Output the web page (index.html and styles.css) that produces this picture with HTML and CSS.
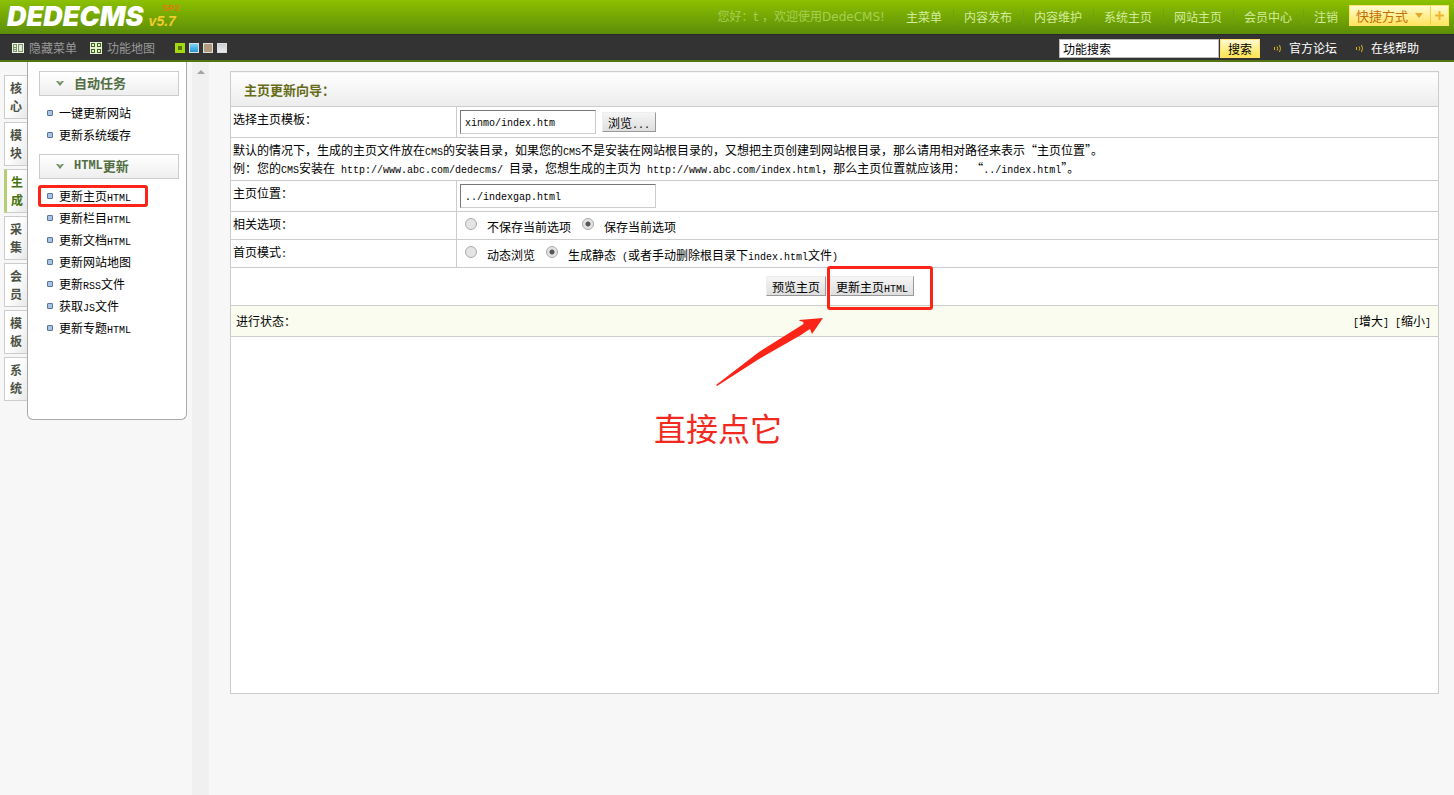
FILE: index.html
```
<!DOCTYPE html>
<html lang="zh-CN">
<head>
<meta charset="utf-8">
<title>DedeCMS</title>
<link rel="stylesheet" href="styles.css">
</head>
<body>
<header class="top">
  <div class="brand"><span class="logo">DEDECMS</span><span class="version">v5.7<small class="sp">SP2</small></span></div>
  <span class="hello">您好：t ，欢迎使用DedeCMS!</span>
  <nav class="topnav">
    <a href="#">主菜单</a><a href="#">内容发布</a><a href="#">内容维护</a><a href="#">系统主页</a><a href="#">网站主页</a><a href="#">会员中心</a><a href="#">注销</a>
  </nav>
  <div class="quick"><button class="quick-main" type="button">快捷方式<svg width="8" height="5" viewBox="0 0 8 5"><path d="M0 0h8L4 5z" fill="#e5a62c"/></svg></button><button class="quick-add" type="button" aria-label="添加"><svg width="9" height="9" viewBox="0 0 9 9"><path d="M3.500 0h2v3.500h3.500v2H5.500V9h-2V5.500H0v-2h3.500z" fill="#efb52e"/></svg></button></div>
</header>
<div class="bar">
  <a class="tool" href="#"><svg width="12" height="12" viewBox="0 0 12 12"><path d="M0 1h12v10H0z" fill="#eef3e6"/><path d="M1 2h4v8H1zM6 2h5v8H6z" fill="#7d9569"/><path d="M2 3h2v2H2zM2 6h2v1H2zM2 8h2v1H2zM7 3h3v6H7z" fill="#dfe8d4"/></svg>隐藏菜单</a>
  <a class="tool" href="#"><svg width="12" height="12" viewBox="0 0 12 12"><path d="M0 0h12v12H0z" fill="#e5efcf"/><path d="M1 1h4v4H1zM7 1h4v4H7zM1 7h4v4H1zM7 7h4v4H7z" fill="#42651f"/><path d="M2 2h2v2H2zM8 2h2v2H8zM2 8h2v2H2zM8 8h2v2H8z" fill="#e5efcf"/></svg>功能地图</a>
  <div class="skins"><i class="skin green"></i><i class="skin blue"></i><i class="skin brown"></i><i class="skin grey"></i></div>
  <form class="search"><input type="text" value="功能搜索" aria-label="功能搜索"><button type="button">搜索</button></form>
  <div class="help">
    <a href="#"><svg width="9" height="9" viewBox="0 0 9 9" fill="none" stroke="#d8b81e"><path d="M1.500 3v3M4 2.500q1.500 2 0 4M6.500 1q2 3.500 0 7"/></svg>官方论坛</a>
    <a href="#"><svg width="9" height="9" viewBox="0 0 9 9" fill="none" stroke="#d8b81e"><path d="M1.500 3v3M4 2.500q1.500 2 0 4M6.500 1q2 3.500 0 7"/></svg>在线帮助</a>
  </div>
</div>
<div class="page">
  <nav class="tabs">
    <a href="#">核<br>心</a><a href="#">模<br>块</a><a href="#" class="on">生<br>成</a><a href="#">采<br>集</a><a href="#">会<br>员</a><a href="#">模<br>板</a><a href="#">系<br>统</a>
  </nav>
  <aside class="side">
    <h2><svg width="8" height="5" viewBox="0 0 8 5"><path d="M0 0h8L4 5z" fill="#6f8d63"/><path d="M2 0h4L4 2z" fill="#cfe0c8"/></svg>自动任务</h2>
    <ul>
      <li><a href="#">一键更新网站</a></li>
      <li><a href="#">更新系统缓存</a></li>
    </ul>
    <h2><svg width="8" height="5" viewBox="0 0 8 5"><path d="M0 0h8L4 5z" fill="#6f8d63"/><path d="M2 0h4L4 2z" fill="#cfe0c8"/></svg><b class="serif">HTML</b>更新</h2>
    <ul>
      <li class="marked"><a href="#">更新主页<span class="m">HTML</span></a></li>
      <li><a href="#">更新栏目<span class="m">HTML</span></a></li>
      <li><a href="#">更新文档<span class="m">HTML</span></a></li>
      <li><a href="#">更新网站地图</a></li>
      <li><a href="#">更新<span class="m">RSS</span>文件</a></li>
      <li><a href="#">获取<span class="m">JS</span>文件</a></li>
      <li><a href="#">更新专题<span class="m">HTML</span></a></li>
    </ul>
  </aside>
  <div class="scroll"><svg width="8" height="4" viewBox="0 0 8 4"><path d="M0 4h8L4 0z" fill="#a3a3a3"/></svg></div>
  <main class="content">
    <table class="form">
      <colgroup><col class="label-col"><col></colgroup>
      <tr class="title"><th colspan="2">主页更新向导：</th></tr>
      <tr class="field"><td><label for="tpl">选择主页模板：</label></td><td><div class="line"><input class="text short" id="tpl" type="text" value="xinmo/index.htm"><button class="btn" type="button">浏览<span class="m">...</span></button></div></td></tr>
      <tr class="note"><td colspan="2">默认的情况下，生成的主页文件放在<span class="m">CMS</span>的安装目录，如果您的<span class="m">CMS</span>不是安装在网站根目录的，又想把主页创建到网站根目录，那么请用相对路径来表示“主页位置”。<br>例：您的<span class="m">CMS</span>安装在<span class="m"> http://www.abc.com/dedecms/ </span>目录，您想生成的主页为<span class="m"> http://www.abc.com/index.html</span>，那么主页位置就应该用：<span class="m"> </span>“<span class="m">../index.html</span>”。</td></tr>
      <tr class="field"><td><label for="pos">主页位置：</label></td><td><input class="text long" id="pos" type="text" value="../indexgap.html"></td></tr>
      <tr class="option"><td>相关选项：</td><td><div class="radios"><label><input type="radio" name="save"><span>不保存当前选项</span></label><label><input type="radio" name="save" checked><span>保存当前选项</span></label></div></td></tr>
      <tr class="option"><td>首页模式<span class="m">:</span></td><td><div class="radios"><label><input type="radio" name="mode"><span>动态浏览</span></label><label><input type="radio" name="mode" checked><span>生成静态<span class="m"> (</span>或者手动删除根目录下<span class="m">index.html</span>文件<span class="m">)</span></span></label></div></td></tr>
      <tr class="actions"><td colspan="2"><div class="buttons"><button class="btn" type="button">预览主页</button><div class="target"><button class="btn" type="button">更新主页<span class="m">HTML</span></button>
        <div class="callout"><svg width="108" height="70" viewBox="0 0 108 70"><path d="M0 68L43 35L86 8Q90 5 84 4L83 3L107 1L96 17L94 12Q89 15 85 18L43 42L1 69z" fill="#fb2418"/></svg><span>直接点它</span></div></div></div></td></tr>
      <tr class="status"><td colspan="2"><div class="status-line"><span>进行状态：</span><span class="sizes"><a href="#"><span class="m">[</span>增大<span class="m">]</span></a><a href="#"><span class="m">[</span>缩小<span class="m">]</span></a></span></div></td></tr>
      <tr class="result"><td colspan="2"></td></tr>
    </table>
  </main>
</div>
</body>
</html>
```
FILE: styles.css
```
*, *::before { box-sizing: border-box; }
body { margin: 0; min-height: 100vh; display: flex; flex-direction: column; background: #f7f7f7; color: #000; font: 12px/18px "Noto Sans CJK SC", sans-serif; }
a { color: inherit; text-decoration: none; }
button, input { font: inherit; color: inherit; margin: 0; }
button { padding: 0; white-space: nowrap; }
svg { display: block; flex: none; }
.m { font: 10px/1 "Liberation Mono", monospace; white-space: pre-wrap; }

.top { display: flex; align-items: center; height: 34px; padding-right: 5px; background: linear-gradient(#8cc000, #5c8d09); color: #d3ec9c; }
.brand { display: flex; align-items: center; padding-left: 7px; margin-right: auto; }
.logo { color: #fff; font: italic 900 27px/34px Inter, sans-serif; }
.version { position: relative; margin-left: 5px; padding-top: 8px; color: #f0cc2c; font: italic bold 14px/18px "Liberation Sans", sans-serif; }
.sp { position: absolute; top: -1px; left: 14px; color: #e07a10; font: bold 9px/10px "Liberation Sans", sans-serif; }
.hello { margin-right: 11px; color: #a5d052; font-family: "DejaVu Sans", "Noto Sans CJK SC", sans-serif; }
.topnav { display: flex; }
.topnav a { padding: 0 11px 0 10px; border-left: 1px solid #6fa314; line-height: 16px; }
.topnav a:first-child { border-left: 0; }
.quick { display: flex; height: 21px; margin: 0 0 3px; border: 1px solid #ffe36e; background: linear-gradient(#fffbd0, #ffe45c); }
.quick-main, .quick-add { display: flex; align-items: center; border: 0; background: none; color: #c56f0c; font-size: 13px; }
.quick-main { gap: 7px; padding: 0 7px 0 6px; }
.quick-add { padding: 0 4px; border-left: 1px solid #f2ce4a; }

.bar { display: flex; align-items: center; height: 28px; padding: 1px 35px 0 12px; background: #333; border-top: 1px solid #292929; border-bottom: 2px solid #527510; color: #999; }
.tool { display: flex; align-items: center; gap: 5px; margin-right: 13px; }
.skins { display: flex; gap: 4px; margin-left: 7px; }
.skin { width: 10px; height: 10px; border: 1px solid #ddd; }
.green { border: 3px solid #a5da10; background: #56790f; }
.blue { background: linear-gradient(#7ad4f8, #2497d0); }
.brown { background: #b09a7d; }
.grey { background: linear-gradient(#ccced5, #e9e9ec); }
.search { display: flex; gap: 1px; margin-left: auto; color: #000; }
.search input { width: 160px; height: 19px; padding: 0 3px; border: 1px solid #bbb; background: #fff; }
.search button { width: 40px; height: 19px; border: 1px solid #ffe36e; background: linear-gradient(#fffad0, #ffe44e); }
.help { display: flex; gap: 18px; margin-left: 13px; color: #fff; }
.help a { display: flex; align-items: center; gap: 7px; }

.page { display: flex; flex: 1; }
.tabs { display: flex; flex-direction: column; gap: 3px; width: 27px; padding: 13px 0 0 4px; }
.tabs a { height: 44px; padding-top: 3px; border: 1px solid #ccc; border-right: 0; background: linear-gradient(110deg, #fff 40%, #e8e8e8); color: #4c5146; font-weight: bold; text-align: center; }
.tabs .on { border-left: 3px solid #b4cf6f; color: #46730f; }
.side { align-self: flex-start; width: 160px; min-height: 358px; padding: 9px 7px 0 11px; border: 1px solid #aaa; border-top: 0; border-radius: 0 0 6px 6px; background: #fff; }
.side h2 { display: flex; align-items: center; height: 25px; margin: 0; padding: 0 0 1px 16px; border: 1px solid #ccc; background: linear-gradient(#fff, #eee); color: #526e43; font-size: 13px; line-height: 18px; }
.side h2 svg { margin-right: 10px; }
.serif { font-family: "Liberation Mono", monospace; font-size: 12px; }
.side ul { margin: 0; padding: 6px 0 8px; list-style: none; }
.side li { display: flex; align-items: center; height: 22px; padding-left: 8px; }
.side li::before { content: ""; width: 6px; height: 6px; margin-right: 6px; border: 1px solid #56749c; border-radius: 1px; background: #a9c3e4; }
.side li.marked { width: 110px; margin-left: -1px; border: 3px solid #fb2418; border-radius: 3px; padding-left: 6px; }
.scroll { width: 17px; margin-left: 5px; padding: 8px 5px; background: #f0f0f0; }
.content { flex: 1; min-width: 0; padding: 9px 15px 0 21px; }

.form { width: 100%; border-collapse: collapse; table-layout: fixed; background: #fff; }
.label-col { width: 226px; }
.form th, .form td { padding: 3px 2px 2px; border: 1px solid #ccc; vertical-align: top; text-align: left; }
.form td + td { padding-left: 3px; }
.form .title th { height: 35px; padding-left: 13px; background: linear-gradient(#fff, #ececec); color: #666b17; vertical-align: middle; font-size: 13px; }
.note { height: 43px; }
.field { height: 31px; }
.line { display: flex; align-items: center; gap: 6px; }
.text { display: block; height: 24px; padding: 2px 4px 0; border: 1px solid #ccc; border-top-color: #777; border-left-color: #777; background: #fff; font: 10px/18px "Liberation Mono", monospace; }
.short { width: 136px; }
.long { width: 196px; }
.btn { height: 20px; padding: 0 5px; border: 1px solid #eee; border-right-color: #999; border-bottom-color: #999; background: linear-gradient(#f5f5f5, #dedede); line-height: 17px; }
.option { height: 28px; }
.radios { display: flex; gap: 11px; padding-left: 5px; }
.radios label { display: flex; gap: 10px; }
.radios label > span { padding-top: 3px; }
.radios input { appearance: none; flex: none; width: 12px; height: 12px; margin-top: 3px; border: 1px solid #aaa; border-radius: 50%; background: #e4e4e4; }
.radios input:checked { background: radial-gradient(#555 0 2px, #e4e4e4 3px); }
.form .actions td { height: 38px; padding: 8px 0; }
.buttons { display: flex; justify-content: center; gap: 4px; padding-left: 11px; }
.target { position: relative; }
.target::before { content: ""; position: absolute; inset: -10px -19px -14px -3px; border: 3px solid #fb2418; border-radius: 3px; pointer-events: none; }
.callout { position: absolute; top: 41px; left: -176px; width: 180px; color: #f4291d; font-size: 32px; line-height: 48px; }
.callout svg { margin-left: 62px; }
.callout span { display: block; margin-top: 16px; }
.form .status td { height: 31px; padding: 6px 7px 6px 5px; background: #f9fcef; }
.status-line, .sizes { display: flex; justify-content: space-between; gap: 6px; }
.result { height: 357px; }
```
